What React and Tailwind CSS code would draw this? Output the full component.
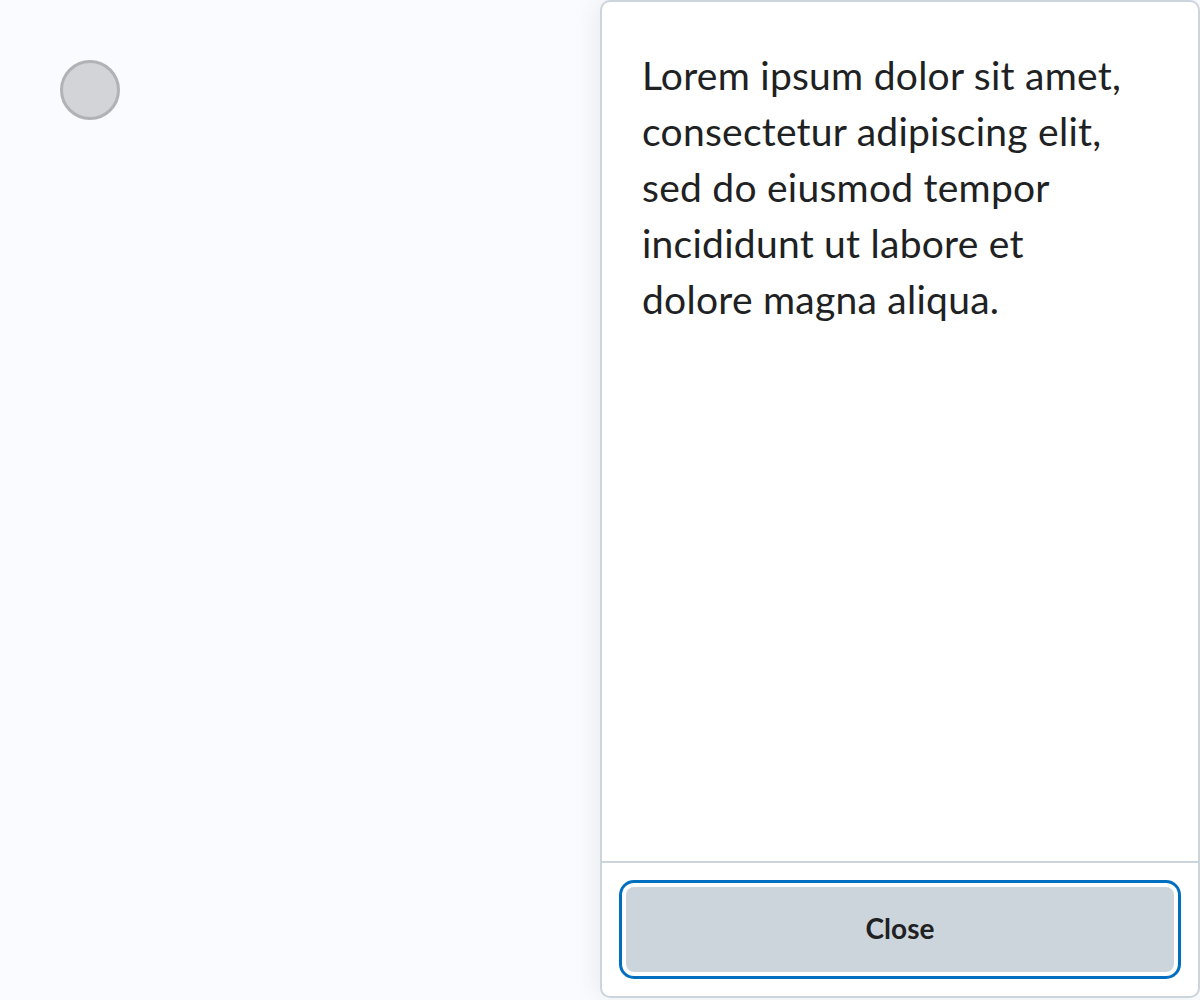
import React from 'react';

const App = () => {
  return (
    <div className="flex h-[1000px] w-[1200px] bg-[#f9fbff] font-['Lato',sans-serif] text-[#202122]">
      {/* Left area with placeholder circle */}
      <div className="flex-1 pl-[60px] pt-[60px]">
        <div className="h-[60px] w-[60px] rounded-full border-[3px] border-[#b1b2b5] bg-[#d3d4d8]" />
      </div>

      {/* Side panel */}
      <aside className="flex h-[998px] w-[600px] flex-col rounded-[10px] border-2 border-[#cdd5dc] bg-white shadow-[-6px_0_24px_rgba(0,0,0,0.06)]">
        <div className="flex-1 pl-10 pr-[64px] pt-[45px]">
          <p className="text-[39px] leading-[56px] tracking-[0.25px]">
            Lorem ipsum dolor sit amet, consectetur adipiscing elit, sed do eiusmod tempor incididunt ut labore et dolore magna aliqua.
          </p>
        </div>
        <div className="border-t-2 border-[#cdd5dc] px-6 py-6">
          <button className="flex h-[85px] w-full items-center justify-center rounded-[8px] bg-[#cdd5dc] pb-1 text-[28px] font-bold text-[#202122] shadow-[0_0_0_4px_#ffffff,0_0_0_7px_#006fbf]">
            Close
          </button>
        </div>
      </aside>
    </div>
  );
};

export default App;
